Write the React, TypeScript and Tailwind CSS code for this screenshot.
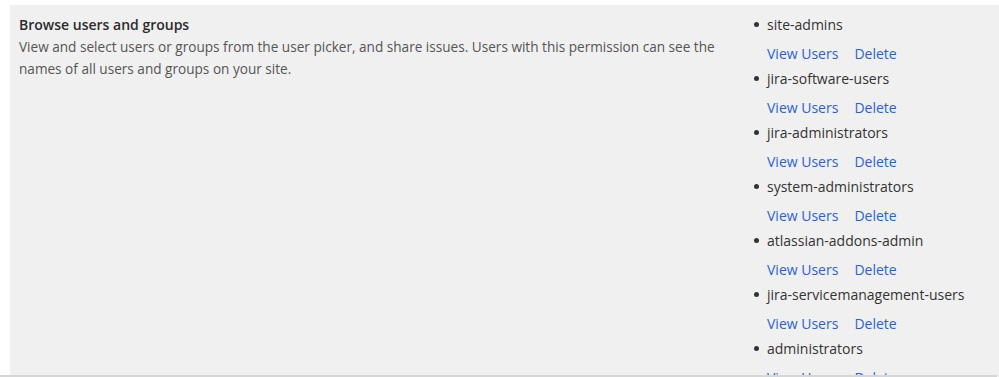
const groups = [
  "site-admins",
  "jira-software-users",
  "jira-administrators",
  "system-administrators",
  "atlassian-addons-admin",
  "jira-servicemanagement-users",
  "administrators",
];

export default function App() {
  return (
    <div
      className="relative h-[377px] w-[999px] overflow-hidden bg-white pt-[5px] pl-[10px]"
      style={{ fontFamily: '"Open Sans", "Noto Sans", sans-serif' }}
    >
      <div className="flex h-[500px] bg-[#f0f0f0] pt-[9px] pl-[9px]">
        {/* Permission description */}
        <div className="w-[728px] shrink-0">
          <h3 className="text-[14px] font-semibold leading-[22px] text-[#2b2b2b]">
            Browse users and groups
          </h3>
          <p className="w-[705px] text-[13.6px] leading-[22px] text-[#555]">
            View and select users or groups from the user picker, and share issues. Users with this
            permission can see the names of all users and groups on your site.
          </p>
        </div>

        {/* Granted groups */}
        <ul className="-mt-[1px] flex flex-col">
          {groups.map((g) => (
            <li key={g} className="flex h-[54px] flex-col">
              <div className="flex h-[22px] items-center text-[14px] text-[#333]">
                <span className="mr-[8px] ml-[7px] h-[5px] w-[5px] rounded-full bg-[#333]" />
                {g}
              </div>
              <div className="mt-[7px] flex h-[22px] items-center gap-[16px] pl-[20px] text-[14px] text-[#2a62d4]">
                <a href="#">View Users</a>
                <a href="#">Delete</a>
              </div>
            </li>
          ))}
        </ul>
      </div>
      <div className="absolute bottom-0 left-0 h-[2px] w-[997px] bg-[#d6d6d6]" />
    </div>
  );
}
